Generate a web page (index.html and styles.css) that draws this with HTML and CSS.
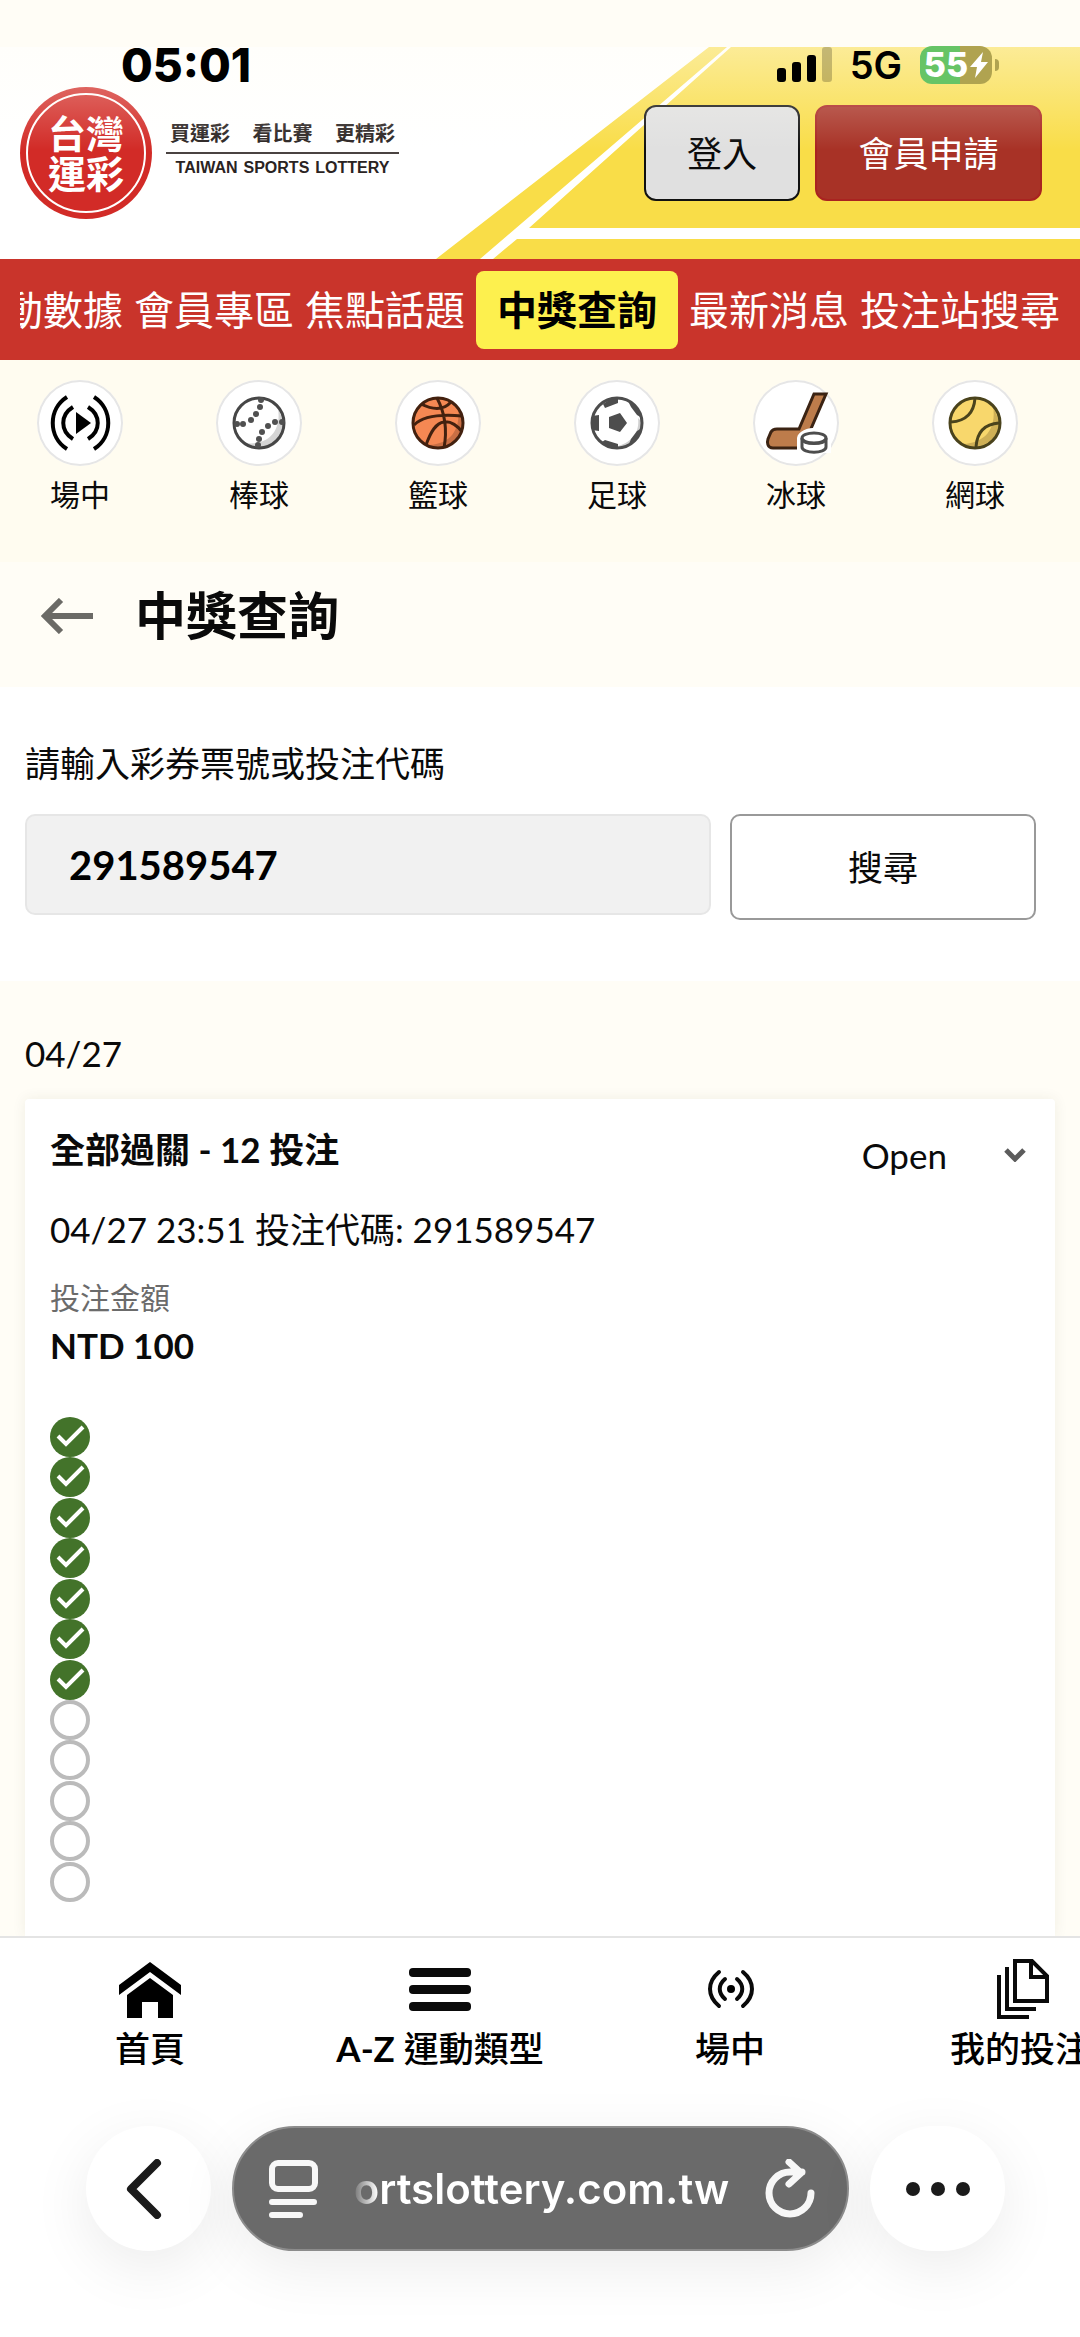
FILE: index.html
```html
<!DOCTYPE html>
<html lang="zh-Hant">
<head>
    <meta charset="UTF-8">
    <meta name="viewport" content="width=device-width, initial-scale=1">
    <title>中獎查詢</title>
    <link rel="stylesheet" href="styles.css">
</head>
<body>
    <header class="header">
        <svg class="header-stripes" viewBox="0 0 644 212" aria-hidden="true">
            <path fill="#f9dd48" d="M0 212 273 0h18L44 212zM57 212l24-20h563v20zM93 181 295 0h349v181z"/>
        </svg>

        <div class="status-bar">
            <span class="clock">05:01</span>
            <div class="status-icons">
                <svg class="signal" viewBox="0 0 55 36" aria-hidden="true">
                    <rect x="0" y="21" width="9" height="14" rx="3"/>
                    <rect x="15" y="15" width="9" height="20" rx="3"/>
                    <rect x="30" y="8" width="9" height="27" rx="3"/>
                    <rect x="45" y="0" width="10" height="35" rx="3" opacity=".22"/>
                </svg>
                <span class="network">5G</span>
                <div class="battery">
                    <span class="battery-level">55</span>
                    <svg class="bolt" viewBox="0 0 18 26" aria-hidden="true"><path d="M13 0 0 15h7L5 26 18 10h-7z" fill="#fff"/></svg>
                </div>
            </div>
        </div>

        <div class="header-main">
            <a class="logo" href="#">
                <svg class="logo-mark" viewBox="0 0 132 132" role="img" aria-label="台灣運彩">
                    <circle cx="66" cy="66" r="66" fill="#d22b27"/>
                    <circle cx="66" cy="66" r="59" fill="none" stroke="#fff" stroke-width="2"/>
                    <text x="66" y="61" class="logo-text">台灣</text>
                    <text x="66" y="101" class="logo-text">運彩</text>
                </svg>
                <span class="tagline">
                    <span class="tagline-zh"><span>買運彩</span><span>看比賽</span><span>更精彩</span></span>
                    <span class="tagline-en"><span>TAIWAN</span><span>SPORTS</span><span>LOTTERY</span></span>
                </span>
            </a>
            <div class="header-buttons">
                <button class="btn-login" type="button">登入</button>
                <button class="btn-join" type="button">會員申請</button>
            </div>
        </div>
    </header>

    <nav class="main-nav">
        <div class="nav-scroll">
            <a href="#">運動數據</a>
            <a href="#">會員專區</a>
            <a href="#">焦點話題</a>
            <a href="#" class="active">中獎查詢</a>
            <a href="#">最新消息</a>
            <a href="#">投注站搜尋</a>
        </div>
    </nav>

    <nav class="sports">
        <a href="#">
            <span class="sport-icon">
                <svg viewBox="0 0 86 86"><g fill="none" stroke="#000" stroke-width="4"><path d="M30 17C11 29 11 57 30 69M57 17c19 12 19 40 0 52M36 27c-13 8-13 24 0 32M51 27c13 8 13 24 0 32"/></g><path d="m39 32 15 11-15 11z"/></svg>
            </span>
            場中
        </a>
        <a href="#">
            <span class="sport-icon">
                <svg viewBox="0 0 86 86"><circle cx="43" cy="43" r="25" fill="#fff"/><path d="M62 28c4 26-13 38-33 35 18 15 43 1 38-22z" fill="#d5d5d5"/><circle cx="43" cy="43" r="25" fill="none" stroke="#464646" stroke-width="3"/><g fill="#505050"><circle cx="45" cy="20" r="3"/><circle cx="44" cy="27" r="3"/><circle cx="40" cy="34" r="3"/><circle cx="35" cy="40" r="3"/><circle cx="27" cy="44" r="3"/><circle cx="21" cy="44" r="3"/><circle cx="66" cy="42" r="3"/><circle cx="59" cy="42" r="3"/><circle cx="52" cy="46" r="3"/><circle cx="46" cy="52" r="3"/><circle cx="43" cy="59" r="3"/><circle cx="42" cy="65" r="3"/></g></svg>
            </span>
            棒球
        </a>
        <a href="#">
            <span class="sport-icon">
                <svg viewBox="0 0 86 86"><circle cx="43" cy="43" r="25" fill="#f58853"/><path d="M63 28c3 22-8 36-29 37 15 8 36-4 34-24z" fill="#c96f44"/><g fill="none" stroke="#43210f" stroke-width="3"><circle cx="43" cy="43" r="25"/><path d="M26 24c12 6 23 6 30-2M42 18c9 17 10 34 7 50M19 45c9-9 26-11 48-9M31 65c5-14 10-22 18-23 7-1 14 4 18 10"/></g></svg>
            </span>
            籃球
        </a>
        <a href="#">
            <span class="sport-icon">
                <svg viewBox="0 0 86 86"><circle cx="43" cy="43" r="25" fill="#fff"/><path d="M64 38c2 14-6 24-20 28h8c12-4 17-14 16-24z" fill="#d0d0d0"/><circle cx="43" cy="43" r="25" fill="none" stroke="#4d4d4d" stroke-width="3"/><g fill="#4d4d4d"><path d="m35 37 11-4 7 10-7 9-11-4zM29 24l2 4 13-5v-5h-6zM18 36l7-1v16l-7-1zM31 60l13 4v4c-6 0-12-3-16-6zM54 21l3 6 6 8 5 3c-2-8-7-14-14-17zM68 48l-5 3-6 8-2 5c6-3 11-8 13-16z"/></g></svg>
            </span>
            足球
        </a>
        <a href="#">
            <span class="sport-icon">
                <svg viewBox="0 0 86 86"><path d="M61 14h12L57 51c-1 4-6 16-11 17H20c-6 0-6-6-5-9l3-7c1-2 3-3 6-3h22z" fill="#bd7c4b" stroke="#3b2313" stroke-width="3"/><path d="M44 73V58c1-8 14-11 22-10 8 0 12 4 12 9v16z" fill="#fff"/><g fill="#fff" stroke="#4d4d4d" stroke-width="3"><path d="M49 58v9c0 7 24 7 24 0v-9"/><ellipse cx="61" cy="58" rx="12" ry="5"/><path d="M49 59c2 6 22 6 24 0" fill="none"/></g></svg>
            </span>
            冰球
        </a>
        <a href="#">
            <span class="sport-icon">
                <svg viewBox="0 0 86 86"><circle cx="43" cy="43" r="25" fill="#f8d76c"/><path d="M61 26c4 24-9 37-30 38 16 8 38-4 36-23z" fill="#cfb056"/><g fill="none" stroke="#4a431c" stroke-width="3"><circle cx="43" cy="43" r="25"/><path d="M43 18c-1 15-9 23-24 24M67 43c-14 1-22 9-23 24"/></g></svg>
            </span>
            網球
        </a>
    </nav>

    <div class="page-title">
        <a class="back" href="#" aria-label="返回">
            <svg viewBox="0 0 53 36"><path d="M53 18H5M21 2 5 18l16 16" fill="none" stroke="#6b6a66" stroke-width="6"/></svg>
        </a>
        <h1>中獎查詢</h1>
    </div>

    <form class="search">
        <label for="ticket">請輸入彩券票號或投注代碼</label>
        <div class="search-row">
            <input id="ticket" type="text" value="291589547">
            <button type="button">搜尋</button>
        </div>
    </form>

    <main class="results">
        <p class="date">04/27</p>
        <article class="bet-card">
            <div class="bet-head">
                <h2>全部過關 - 12 投注</h2>
                <button class="bet-status" type="button">
                    Open
                    <svg viewBox="0 0 22 14" aria-hidden="true"><path d="m2 2 9 9 9-9" fill="none" stroke="#5c5c5c" stroke-width="5"/></svg>
                </button>
            </div>
            <p class="bet-code">04/27 23:51 投注代碼: 291589547</p>
            <p class="bet-label">投注金額</p>
            <p class="bet-amount">NTD 100</p>
            <ul class="legs" id="legs"></ul>
        </article>
    </main>

    <nav class="tab-bar">
        <a href="#">
            <svg viewBox="0 0 62 62"><path d="M31 4 62 27v10L31 14 0 37V27zM31 20l23 17v23H39V44H23v16H8V37z"/></svg>
            首頁
        </a>
        <a href="#">
            <svg viewBox="0 0 62 62"><g fill="#0a0a0a"><rect y="10" width="62" height="9" rx="4"/><rect y="27" width="62" height="9" rx="4"/><rect y="44" width="62" height="9" rx="4"/></g></svg>
            <span><b>A-Z</b> 運動類型</span>
        </a>
        <a href="#">
            <svg viewBox="0 0 62 62"><g fill="none" stroke="#0a0a0a" stroke-width="4" stroke-linecap="round"><path d="M20 14c-12 10-12 24 0 34M44 14c12 10 12 24 0 34M26 21c-7 6-7 14 0 20M38 21c7 6 7 14 0 20"/></g><circle cx="32" cy="31" r="4"/></svg>
            場中
        </a>
        <a href="#">
            <svg viewBox="0 0 62 62"><g fill="none" stroke="#0a0a0a" stroke-width="4"><path d="M26 3h17l15 15v25H26zM42 3v16h16M18 9v42h29M10 17v42h30"/></g></svg>
            我的投注
        </a>
    </nav>

    <div class="browser-bar">
        <button class="browser-back" type="button" aria-label="上一頁">
            <svg viewBox="0 0 36 60"><path d="M31 4 5 30l26 26" fill="none" stroke="#1b1b1b" stroke-width="8" stroke-linecap="round" stroke-linejoin="round"/></svg>
        </button>
        <div class="address">
            <svg class="reader-icon" viewBox="0 0 50 60" aria-hidden="true"><g fill="none" stroke="#f7f7f7" stroke-width="6" stroke-linecap="round"><rect x="4" y="4" width="43" height="26" rx="6"/><path d="M4 43h42M4 56h28"/></g></svg>
            <span class="url">ortslottery.com.tw</span>
            <button class="reload" type="button" aria-label="重新載入">
                <svg viewBox="0 0 50 60"><path d="M46 34A21 21 0 1 1 25 13h12M24 3l12 11-12 11" fill="none" stroke="#f7f7f7" stroke-width="7" stroke-linecap="round" stroke-linejoin="round"/></svg>
            </button>
        </div>
        <button class="browser-more" type="button" aria-label="更多">
            <svg viewBox="0 0 64 14"><g fill="#1b1b1b"><circle cx="7" cy="7" r="7"/><circle cx="32" cy="7" r="7"/><circle cx="57" cy="7" r="7"/></g></svg>
        </button>
    </div>

    <script>
        const total = 12;
        const hits = 7;
        const ok = '<svg viewBox="0 0 40 40"><circle cx="20" cy="20" r="20" fill="#43732a"/><path d="m8 19 8 8 17-17" fill="none" stroke="#fff" stroke-width="4"/></svg>';
        const pending = '<svg viewBox="0 0 40 40"><circle cx="20" cy="20" r="18" fill="none" stroke="#bbb" stroke-width="4"/></svg>';

        let legs = document.getElementById("legs");
        for (let i = 0; i < total; i++) {
            let li = document.createElement("li");
            li.innerHTML = i < hits ? ok : pending;
            legs.appendChild(li);
        }
    </script>
</body>
</html>
```
FILE: styles.css
```css
* { box-sizing: border-box; }

body {
    margin: 0;
    min-height: 100vh;
    display: flex;
    flex-direction: column;
    background-color: #fffdf6;
    color: #0a0a0a;
    font-family: Lato, "Noto Sans CJK TC", sans-serif;
    font-size: 35px;
    line-height: 48px;
    overflow-x: hidden;
}

h1, h2, p, ul { margin: 0; padding: 0; }
a { color: inherit; text-decoration: none; }
button { font: inherit; color: inherit; padding: 0; border: none; background: none; cursor: pointer; }
svg { display: block; }

/* Header */
.header { position: relative; background-color: #fff; }

.header-stripes {
    position: absolute;
    right: 0;
    bottom: 0;
    width: 644px;
    height: 212px;
}

/* light veil under the status bar */
.header::after {
    content: "";
    position: absolute;
    inset: 0;
    pointer-events: none;
    background: linear-gradient(#fffdf6 47px, rgba(255, 253, 246, 0.45) 47px, rgba(255, 253, 246, 0) 150px);
}

.status-bar {
    position: relative;
    z-index: 1;
    display: flex;
    justify-content: space-between;
    align-items: center;
    height: 87px;
    padding: 42px 80px 0 121px;
    font-family: Inter, sans-serif;
    color: #000;
}

.clock { font-size: 46px; font-weight: 800; }
.status-icons { display: flex; align-items: center; gap: 18px; }
.signal { width: 55px; height: 36px; }
.network { font-size: 38px; font-weight: 600; }

.battery {
    position: relative;
    display: flex;
    align-items: center;
    justify-content: center;
    gap: 2px;
    width: 72px;
    height: 38px;
    margin-right: 8px;
    border-radius: 12px;
    background: linear-gradient(90deg, #66c466 55%, #b0a350 55%);
}

.battery::after {
    content: "";
    position: absolute;
    right: -7px;
    top: 13px;
    width: 4px;
    height: 12px;
    border-radius: 0 4px 4px 0;
    background-color: #b0a350;
}

.battery-level { font-size: 34px; font-weight: 800; color: #fff; }
.bolt { width: 18px; height: 26px; }

.header-main {
    position: relative;
    display: flex;
    justify-content: space-between;
    align-items: center;
    padding: 0 38px 40px 20px;
}

.logo { display: flex; align-items: center; gap: 14px; }
.logo-mark { width: 132px; height: 132px; }
.logo-text { font-size: 38px; font-weight: 700; fill: #fff; text-anchor: middle; }

.tagline { color: #2a2322; font-weight: 700; }
.tagline-zh {
    display: flex;
    justify-content: space-between;
    width: 233px;
    padding: 0 4px 4px;
    font-size: 20px;
    line-height: 30px;
    border-bottom: 2px solid #4a4341;
}
.tagline-en {
    display: flex;
    justify-content: center;
    gap: 6px;
    padding-bottom: 6px;
    font-family: "Liberation Sans", sans-serif;
    font-size: 16px;
    line-height: 28px;
}

.header-buttons { display: flex; gap: 15px; }
.header-buttons button { height: 96px; border-radius: 12px; }
.btn-login { width: 156px; border: 2px solid #111; background-color: #e0e0e0; }
.btn-join { width: 227px; border: 2px solid #a92320; background-color: #a83226; color: #fff; }

/* Red menu */
.main-nav { padding: 12px 20px 11px; background-color: #c9342b; }

.nav-scroll {
    display: flex;
    justify-content: flex-end;
    align-items: center;
    gap: 11px;
    overflow: hidden;
    font-size: 40px;
    line-height: 78px;
    white-space: nowrap;
    color: #fff;
}

.nav-scroll .active {
    padding: 0 21px;
    border-radius: 8px;
    background-color: #fdf04e;
    color: #000;
    font-weight: 700;
}

/* Sports */
.sports {
    display: flex;
    justify-content: space-between;
    padding: 20px 62px 44px 37px;
    background-color: #fffcf0;
}

.sports a {
    display: flex;
    flex-direction: column;
    align-items: center;
    gap: 4px;
    font-size: 30px;
}

.sport-icon {
    width: 86px;
    height: 86px;
    border-radius: 50%;
    background-color: #fff;
    box-shadow: inset 0 0 0 2px #e6e6e6;
}

/* Title */
.page-title {
    display: flex;
    align-items: center;
    gap: 42px;
    padding: 18px 40px 35px;
}

.back svg { width: 53px; height: 36px; }
.page-title h1 { font-size: 51px; line-height: 72px; font-weight: 700; }

/* Search */
.search { padding: 52px 44px 61px 25px; background-color: #fff; }
.search label { display: block; margin-bottom: 27px; }
.search-row { display: flex; align-items: flex-start; gap: 19px; }

.search input {
    flex: 1;
    min-width: 0;
    height: 101px;
    padding: 0 42px;
    border: 2px solid #e6e6e6;
    border-radius: 10px;
    background-color: #f1f1f1;
    color: #000;
    font: 700 40px Lato, sans-serif;
}

.search button {
    width: 306px;
    height: 106px;
    border: 2px solid #999;
    border-radius: 10px;
    background-color: #fff;
}

/* Results */
.results {
    flex: 1;
    display: flex;
    flex-direction: column;
    padding: 48px 25px 0;
}

.date { margin-bottom: 22px; }

.bet-card {
    flex: 1;
    padding: 26px 25px 20px;
    border-radius: 4px 4px 0 0;
    background-color: #fff;
    box-shadow: 0 0 14px rgba(60, 60, 0, 0.08);
}

.bet-head { display: flex; justify-content: space-between; }
.bet-head h2 { font-size: 35px; font-weight: 700; }

.bet-status {
    display: flex;
    align-items: center;
    gap: 57px;
    padding-top: 6px;
    padding-right: 4px;
}
.bet-status svg { width: 22px; height: 14px; }

.bet-code { margin: 26px 0 20px; }
.bet-label { font-size: 30px; color: #6b6b6b; }
.bet-amount { font-weight: 700; }

.legs {
    display: grid;
    grid-auto-rows: 1fr;
    height: 485px;
    margin-top: 48px;
    list-style: none;
}
.legs svg { width: 40px; height: 40px; }

/* Bottom tabs */
.tab-bar {
    display: flex;
    padding: 20px 5px 17px;
    border-top: 2px solid #e4e4e4;
    background-color: #fff;
    font-weight: 500;
    overflow: hidden;
}

.tab-bar a {
    flex: 0 0 290px;
    display: flex;
    flex-direction: column;
    align-items: center;
    gap: 4px;
    color: #000;
    white-space: nowrap;
}
.tab-bar svg { width: 62px; height: 62px; }

/* Browser controls */
.browser-bar {
    display: flex;
    gap: 21px;
    padding: 37px 75px 86px 86px;
    background-color: #fff;
}

.browser-bar > * {
    height: 125px;
    border-radius: 63px;
    background-color: #fff;
    box-shadow: 0 16px 60px rgba(0, 0, 0, 0.08);
}

.browser-back, .browser-more { display: flex; align-items: center; justify-content: center; }
.browser-back { width: 125px; padding-right: 10px; }
.browser-back svg { width: 36px; height: 60px; }
.browser-more { width: 135px; }
.browser-more svg { width: 64px; height: 14px; }

.browser-bar .address {
    flex: 1;
    min-width: 0;
    display: flex;
    align-items: center;
    justify-content: space-between;
    padding: 0 32px 0 34px;
    border: 2px solid #8c8c8c;
    background-color: #6a6a6a;
}

.address svg { width: 50px; height: 60px; }

.url {
    font-family: Inter, sans-serif;
    font-size: 42px;
    font-weight: 600;
    background: linear-gradient(90deg, #777, #fff 24px);
    background-clip: text;
    -webkit-background-clip: text;
    color: transparent;
}
```
